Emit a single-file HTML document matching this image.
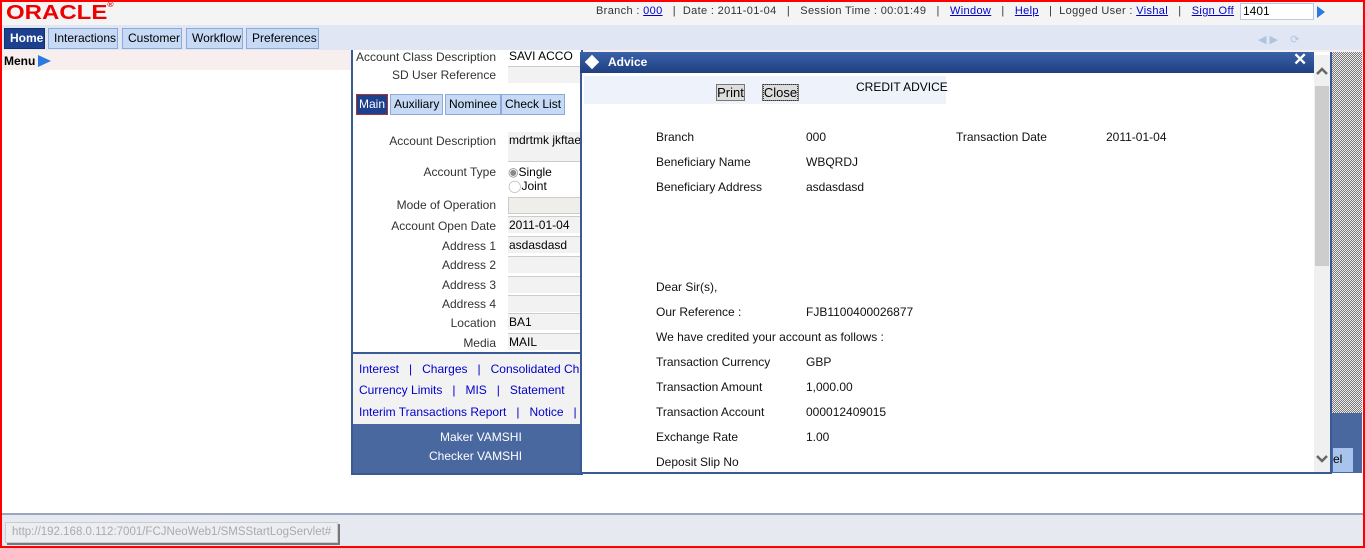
<!DOCTYPE html>
<html><head><meta charset="utf-8"><style>
*{margin:0;padding:0;box-sizing:border-box}
body{width:1365px;height:548px;position:relative;overflow:hidden;background:#fff;font-family:"Liberation Sans",Arial,sans-serif;font-size:12px;color:#000}
.a{position:absolute}
a{color:#00c;text-decoration:underline}
.tab{position:absolute;top:28px;height:21px;background:#c6d9f5;border:1px solid #8fa9d6;font-size:12px;line-height:19px;padding:0 5px;color:#000}
.lbl{position:absolute;right:0;text-align:right;color:#333;font-size:12px}
.inp{position:absolute;left:155px;width:80px;height:17px;background:#f2f2f2;border-top:1px solid #ccc;font-size:12px;padding-left:1px;line-height:16px}
.t{position:absolute;font-size:12px;color:#111}
.lk{color:#00c;font-size:12px}
.hatch{background-color:#aaa;background-image:repeating-conic-gradient(#777 0 25%,#eee 0 50%);background-size:2px 2px}
</style></head><body>
<div class="a" style="left:0;top:0;width:1365px;height:25px;background:#f4f4f4"></div>
<div class="a" style="left:6px;top:2px;font-size:20px;font-weight:bold;color:#e00;transform:scaleX(1.2);transform-origin:left">ORACLE<span style="font-size:7px;vertical-align:top">®</span></div>
<div class="a" style="left:596px;top:5px;font-size:11px;color:#333;white-space:nowrap;letter-spacing:0.35px">Branch : <a>000</a> &nbsp; | &nbsp;Date : 2011-01-04 &nbsp; | &nbsp; Session Time : 00:01:49 &nbsp; | &nbsp; <a>Window</a> &nbsp; | &nbsp; <a>Help</a> &nbsp; | &nbsp;Logged User : <a>Vishal</a> &nbsp; | &nbsp; <a>Sign Off</a></div>
<div class="a" style="left:1240px;top:3px;width:74px;height:17px;background:#fff;border:1px solid #b8c8e0;font-size:12px;padding-left:2px">1401</div>
<div class="a" style="left:1317px;top:6px;width:0;height:0;border-left:8px solid #2a7ae0;border-top:6px solid transparent;border-bottom:6px solid transparent"></div>
<div class="a" style="left:0;top:25px;width:1365px;height:25px;background:#e0e6f3"></div>
<div class="tab" style="left:4px;width:41px;background:#1c3f8e;color:#fff;border-color:#12306e;font-weight:bold">Home</div>
<div class="tab" style="left:48px;width:70px">Interactions</div>
<div class="tab" style="left:122px;width:60px">Customer</div>
<div class="tab" style="left:186px;width:57px">Workflow</div>
<div class="tab" style="left:246px;width:73px">Preferences</div>
<div class="a" style="left:1258px;top:33px;color:#b0c4e0;font-size:11px">◀ ▶ &nbsp;&nbsp; ⟳</div>
<div class="a" style="left:0;top:50px;width:1365px;height:20px;background:#f7eeee"></div>
<div class="a" style="left:4px;top:54px;font-weight:bold;font-size:12px">Menu</div>
<div class="a" style="left:38px;top:55px;width:0;height:0;border-left:13px solid #2a7ae0;border-top:6px solid transparent;border-bottom:6px solid transparent"></div>
<div class="a" style="left:351px;top:50px;width:232px;height:425px;background:#fff;border:2px solid #3a5a95;border-top:none;overflow:hidden">
 <div class="a" style="left:0;top:0;width:143px;height:300px">
  <div class="lbl" style="top:0">Account Class Description</div>
  <div class="lbl" style="top:18px">SD User Reference</div>
  <div class="lbl" style="top:84px">Account Description</div>
  <div class="lbl" style="top:115px">Account Type</div>
  <div class="lbl" style="top:148px">Mode of Operation</div>
  <div class="lbl" style="top:169px">Account Open Date</div>
  <div class="lbl" style="top:189px">Address 1</div>
  <div class="lbl" style="top:208px">Address 2</div>
  <div class="lbl" style="top:228px">Address 3</div>
  <div class="lbl" style="top:247px">Address 4</div>
  <div class="lbl" style="top:266px">Location</div>
  <div class="lbl" style="top:286px">Media</div>
 </div>
 <div class="inp" style="top:0;background:#fff;border:none;line-height:12px">SAVI ACCO</div>
 <div class="inp" style="top:16px"></div>
 <div class="a" style="left:3px;top:44px;height:21px;background:#1c3f8e;color:#fff;border:1px solid #a33;padding:0 2px;line-height:19px">Main</div>
 <div class="a" style="left:37px;top:44px;height:21px;background:#c6d9f5;border:1px solid #8fa9d6;padding:0 3px;line-height:19px">Auxiliary</div>
 <div class="a" style="left:92px;top:44px;height:21px;background:#c6d9f5;border:1px solid #8fa9d6;padding:0 3px;line-height:19px">Nominee</div>
 <div class="a" style="left:148px;top:44px;height:21px;background:#c6d9f5;border:1px solid #8fa9d6;padding:0 3px;line-height:19px">Check List</div>
 <div class="inp" style="top:82px;height:30px;border-top:none;border-bottom:1px solid #ccc">mdrtmk jkftae</div>
 <div class="a" style="left:155px;top:115px;font-size:12px;line-height:14px"><span style="color:#888">◉</span>Single<br><span style="color:#bbb">◯</span>Joint</div>
 <div class="inp" style="top:147px;background:#efeee9;border:1px solid #ccc"></div>
 <div class="inp" style="top:166px">2011-01-04</div>
 <div class="inp" style="top:186px">asdasdasd</div>
 <div class="inp" style="top:206px"></div>
 <div class="inp" style="top:226px"></div>
 <div class="inp" style="top:245px"></div>
 <div class="inp" style="top:263px">BA1</div>
 <div class="inp" style="top:283px">MAIL</div>
 <div class="a" style="left:0;top:302px;width:232px;height:2px;background:#3a5a95"></div>
 <div class="a" style="left:0;top:304px;width:232px;height:70px;background:#f2f2f2"></div>
 <div class="a lk" style="left:6px;top:312px;white-space:nowrap">Interest &nbsp; | &nbsp; Charges &nbsp; | &nbsp; Consolidated Ch</div>
 <div class="a lk" style="left:6px;top:333px;white-space:nowrap">Currency Limits &nbsp; | &nbsp; MIS &nbsp; | &nbsp; Statement</div>
 <div class="a lk" style="left:6px;top:355px;white-space:nowrap">Interim Transactions Report &nbsp; | &nbsp; Notice &nbsp; |</div>
 <div class="a" style="left:0;top:374px;width:232px;height:51px;background:#4a68a0;color:#fff;font-size:12px">
  <div class="a" style="left:87px;top:6px">Maker VAMSHI</div>
  <div class="a" style="left:76px;top:25px">Checker VAMSHI</div>
 </div>
</div>
<div class="a" style="left:580px;top:52px;width:752px;height:422px;background:#fff;border:2px solid #3a5a95;border-top:none"></div>
<div class="a" style="left:580px;top:52px;width:734px;height:21px;background:linear-gradient(#3a62a8,#1f3f80)"></div>
<div class="a" style="left:586px;top:56px;width:12px;height:12px;background:#fff;transform:rotate(45deg) scale(.85)"></div>
<div class="a" style="left:608px;top:55px;color:#fff;font-weight:bold;font-size:12px">Advice</div>
<div class="a" style="left:1293px;top:50px;color:#fff;font-weight:bold;font-size:17px">✕</div>
<div class="a" style="left:584px;top:76px;width:362px;height:28px;background:#eef2fa"></div>
<div class="a" style="left:716px;top:84px;width:29px;height:17px;background:#ddd;border:1px solid #777;font-size:13px;line-height:15px;text-align:center">Print</div>
<div class="a" style="left:762px;top:84px;width:37px;height:17px;background:#ddd;border:1px solid #777;font-size:13px;line-height:15px;text-align:center"><span style="outline:1px dotted #333">Close</span></div>
<div class="a" style="left:856px;top:80px;font-size:12px">CREDIT ADVICE</div>
<div class="t" style="left:656px;top:130px">Branch</div><div class="t" style="left:806px;top:130px">000</div>
<div class="t" style="left:956px;top:130px">Transaction Date</div><div class="t" style="left:1106px;top:130px">2011-01-04</div>
<div class="t" style="left:656px;top:155px">Beneficiary Name</div><div class="t" style="left:806px;top:155px">WBQRDJ</div>
<div class="t" style="left:656px;top:180px">Beneficiary Address</div><div class="t" style="left:806px;top:180px">asdasdasd</div>
<div class="t" style="left:656px;top:280px">Dear Sir(s),</div>
<div class="t" style="left:656px;top:305px">Our Reference :</div><div class="t" style="left:806px;top:305px">FJB1100400026877</div>
<div class="t" style="left:656px;top:330px">We have credited your account as follows :</div>
<div class="t" style="left:656px;top:355px">Transaction Currency</div><div class="t" style="left:806px;top:355px">GBP</div>
<div class="t" style="left:656px;top:380px">Transaction Amount</div><div class="t" style="left:806px;top:380px">1,000.00</div>
<div class="t" style="left:656px;top:405px">Transaction Account</div><div class="t" style="left:806px;top:405px">000012409015</div>
<div class="t" style="left:656px;top:430px">Exchange Rate</div><div class="t" style="left:806px;top:430px">1.00</div>
<div class="t" style="left:656px;top:455px">Deposit Slip No</div>
<div class="a" style="left:1314px;top:55px;width:16px;height:417px;background:#f0f0f0"></div>
<div class="a" style="left:1315px;top:86px;width:14px;height:180px;background:#cdcdcd"></div>
<svg class="a" style="left:1315px;top:66px" width="14" height="10"><path d="M2 8 L7 3 L12 8" stroke="#666" stroke-width="2.5" fill="none"/></svg>
<svg class="a" style="left:1315px;top:454px" width="14" height="10"><path d="M2 2 L7 7 L12 2" stroke="#666" stroke-width="2.5" fill="none"/></svg>
<div class="a hatch" style="left:1332px;top:52px;width:30px;height:420px"></div>
<div class="a" style="left:1330px;top:52px;width:2px;height:422px;background:#3a5a95"></div>
<div class="a" style="left:1332px;top:413px;width:30px;height:60px;background:#4a68a0"></div>
<div class="a" style="left:1333px;top:448px;width:20px;height:24px;background:#a8c4ec;font-size:12px;line-height:22px">el</div>
<div class="a" style="left:0;top:513px;width:1365px;height:35px;background:#e6e9ef;border-top:2px solid #9aa6c0"></div>
<div class="a" style="left:5px;top:522px;width:333px;height:21px;background:#eceef2;border:1px solid #ccc;box-shadow:2px 2px 0 #777;color:#aaa;font-size:11.5px;line-height:19px;padding-left:6px;white-space:nowrap;overflow:hidden">http://192.168.0.112:7001/FCJNeoWeb1/SMSStartLogServlet#</div>
<div class="a" style="left:0;top:0;width:1365px;height:548px;border:2px solid #f00;pointer-events:none"></div>
</body></html>
